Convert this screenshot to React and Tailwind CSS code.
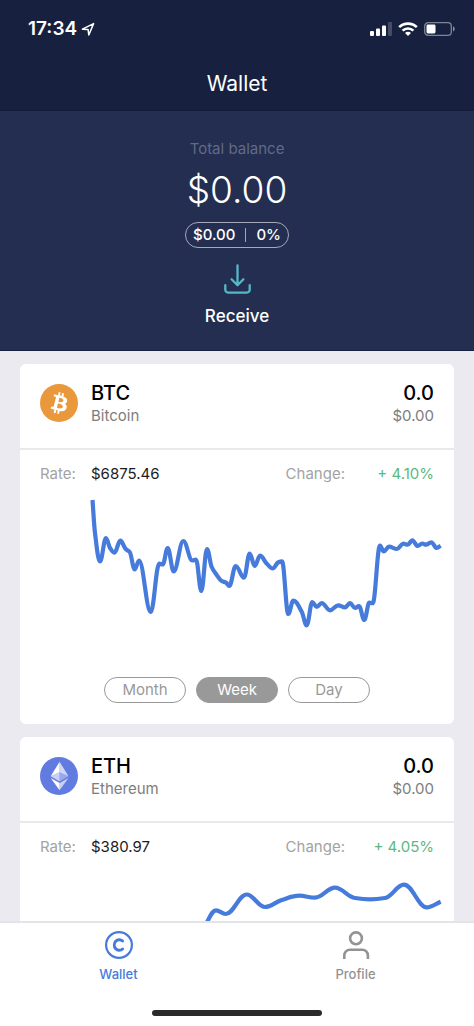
import React, { useState } from "react";

const btcPoints = [
  [0.5, 0], [3, 33], [8, 61.5], [14, 38], [18, 48], [22.5, 52.7], [28.3, 40.7], [33.7, 49],
  [37.7, 52], [42.7, 69.5], [47, 60.5], [58.7, 112], [67.3, 63.5], [70.7, 64.5], [75.7, 48],
  [81.7, 71.5], [91.3, 41], [100.3, 60.5], [104, 59.5], [109.3, 91], [115, 49], [119.7, 67],
  [123.7, 73.5], [129.7, 81], [134, 82.7], [137.3, 86], [143.7, 66], [152, 77.7], [157.7, 53.5],
  [162.7, 66], [168, 55.7], [174.7, 63.5], [180.7, 68.5], [186.3, 62.3], [190, 61.3],
  [196.3, 114], [201.3, 100.5], [209.7, 111.7], [214.7, 125.3], [220.3, 102], [224.7, 107],
  [229.7, 103], [238, 110.3], [246.3, 105.3], [253, 107.3], [258, 103], [263, 108], [267, 106],
  [272.3, 120], [277.3, 102.7], [280.7, 103.2], [288, 45.5], [291.7, 51.5], [297, 46.7],
  [305, 49], [311.3, 43.7], [315.7, 44.7], [320.3, 40.3], [325.7, 46], [330.3, 43.5],
  [334, 44.7], [339.3, 42.3], [344.7, 48], [348.7, 45.7],
];

const ethPoints = [
  [0, 96], [30, 78], [58, 104], [86, 88], [104, 78], [114.5, 50], [124, 37.3], [133.7, 41],
  [154.7, 21.5], [173, 34], [189.7, 27], [207.3, 22.7], [223, 24.7], [243, 14.7],
  [263, 25], [278, 26.3], [293, 25], [312, 11.7], [334.7, 34.3], [348.7, 28.7],
];

// Monotone cubic interpolation: peaks and valleys stay on the data points.
function smoothPath(p) {
  const n = p.length;
  const d = [];
  for (let i = 0; i < n - 1; i++) d.push((p[i + 1][1] - p[i][1]) / (p[i + 1][0] - p[i][0]));
  const m = p.map((_, i) => {
    if (i === 0) return d[0];
    if (i === n - 1) return d[n - 2];
    return d[i - 1] * d[i] <= 0 ? 0 : (2 * d[i - 1] * d[i]) / (d[i - 1] + d[i]);
  });
  let s = `M${p[0][0]} ${p[0][1]}`;
  for (let i = 0; i < n - 1; i++) {
    const h = (p[i + 1][0] - p[i][0]) * 0.38;
    s += `C${p[i][0] + h} ${p[i][1] + m[i] * h} ${p[i + 1][0] - h} ${p[i + 1][1] - m[i + 1] * h} ${p[i + 1][0]} ${p[i + 1][1]}`;
  }
  return s;
}

function BitcoinIcon() {
  return (
    <svg viewBox="0 0 32 32" className="size-[38px] shrink-0" aria-hidden="true">
      <circle cx="16" cy="16" r="16" fill="#e9983c" />
      <path
        transform="translate(1.3 1.2) scale(.93)"
        fill="#fff"
        fillRule="evenodd"
        d="M23.189 14.02c.314-2.096-1.283-3.223-3.465-3.975l.708-2.84-1.728-.43-.69 2.765c-.454-.114-.92-.22-1.385-.326l.695-2.783L15.596 6l-.708 2.839c-.376-.086-.746-.17-1.104-.26l.002-.009-2.384-.595-.46 1.846s1.283.294 1.256.312c.7.175.826.638.805 1.006l-.806 3.235c.048.012.11.03.18.057l-.183-.045-1.13 4.532c-.086.212-.303.531-.793.41.018.025-1.256-.313-1.256-.313l-.858 1.978 2.25.561c.418.105.828.215 1.231.318l-.715 2.872 1.727.43.708-2.84c.472.127.93.245 1.378.357l-.706 2.828 1.728.43.715-2.866c2.948.558 5.164.333 6.097-2.333.752-2.146-.037-3.385-1.588-4.192 1.13-.26 1.98-1.003 2.207-2.538zm-3.95 5.538c-.533 2.147-4.148.986-5.32.695l.95-3.805c1.172.293 4.929.872 4.37 3.11zm.535-5.569c-.487 1.953-3.495.96-4.47.717l.86-3.45c.975.243 4.118.696 3.61 2.733z"
      />
    </svg>
  );
}

function EthereumIcon() {
  return (
    <svg viewBox="0 0 32 32" className="size-[38px] shrink-0" aria-hidden="true">
      <circle cx="16" cy="16" r="16" fill="#627be0" />
      <g fill="#fff">
        <path fillOpacity=".7" d="M16.498 4v8.87l7.497 3.35z" />
        <path d="M16.498 4L9 16.22l7.498-3.35z" />
        <path fillOpacity=".65" d="M16.498 21.968v6.027L24 17.616z" />
        <path d="M16.498 27.995v-6.028L9 17.616z" />
        <path fillOpacity=".35" d="M16.498 20.573l7.497-4.353-7.497-3.348z" />
        <path fillOpacity=".65" d="M9 16.22l7.498 4.353v-7.701z" />
      </g>
    </svg>
  );
}

function CoinCard({ icon, symbol, name, rate, change, points, ranges = [] }) {
  const [range, setRange] = useState("Week");
  return (
    <article className="shrink-0 rounded-md bg-white">
      <header className="flex h-[86px] items-start gap-[13px] border-b-2 border-[#e9e9ec] px-5 pt-[17px]">
        <div className="pt-[3px]">{icon}</div>
        <div className="flex-1">
          <h2 className="text-xl leading-6 font-medium text-black">{symbol}</h2>
          <p className="text-[15px] leading-[22px] text-[#7d7d7d]">{name}</p>
        </div>
        <div className="text-right">
          <p className="text-xl leading-6 font-medium text-black">0.0</p>
          <p className="text-[15px] leading-[22px] text-[#7d7d7d]">$0.00</p>
        </div>
      </header>
      <dl className="flex px-5 pt-3 text-[15px] leading-6">
        <dt className="w-[51px] text-[#a3a3a3]">Rate:</dt>
        <dd className="flex-1 text-[#1c1c1c]">{rate}</dd>
        <dt className="text-[#a3a3a3]">Change:</dt>
        <dd className="w-[89px] text-right text-[#5cb881]">{change}</dd>
      </dl>
      <div className="pt-[14px] pr-[13px] pb-[47px] pl-[72px]">
        <svg viewBox="0 0 349 130" className="block w-full overflow-visible" role="img" aria-label={`${name} rate`}>
          <path d={smoothPath(points)} fill="none" stroke="#467bdb" strokeWidth="4.2" strokeLinejoin="round" />
        </svg>
      </div>
      {ranges.length > 0 && (
        <div className="flex justify-center gap-[10px] pb-[21px]">
          {ranges.map((r) => (
            <button
              key={r}
              type="button"
              aria-pressed={range === r}
              onClick={() => setRange(r)}
              className={
                "h-[26px] w-[82px] rounded-full border text-[15px] leading-6 " +
                (range === r ? "border-[#999] bg-[#999] text-white" : "border-[#999] bg-white text-[#999]")
              }
            >
              {r}
            </button>
          ))}
        </div>
      )}
    </article>
  );
}

export default function App() {
  return (
    <div className="flex h-dvh flex-col bg-[#ebeaf1] font-['Inter','Liberation_Sans',sans-serif]">
      <header className="shrink-0 border-b border-[#131c38] bg-[#17213f] text-white">
        <div className="flex h-[58px] items-center justify-between pr-[18px] pl-7">
          <div className="flex items-center gap-1">
            <span className="text-[19px] leading-6 font-semibold">17:34</span>
            <svg viewBox="0 0 14 14" className="size-[14px]" aria-hidden="true">
              <path d="M12.6 1.6L1.4 7.2l5.7.4.7 5.4z" fill="none" stroke="#fff" strokeWidth="1.5" strokeLinejoin="round" />
            </svg>
          </div>
          <div className="flex items-center gap-[6px]">
            <svg viewBox="0 0 22 14" className="h-[14px] w-[22px]" fill="#fff" aria-hidden="true">
              <rect x="0" y="9" width="4" height="5" rx="1" />
              <rect x="6" y="6.5" width="4" height="7.5" rx="1" />
              <rect x="12" y="3.5" width="4" height="10.5" rx="1" />
              <rect x="18" y="0" width="4" height="14" rx="1" fillOpacity=".2" />
            </svg>
            <svg viewBox="0 0 20 14" className="h-[14px] w-5" aria-hidden="true">
              <g fill="none" stroke="#fff" strokeWidth="2.6">
                <path d="M1.2 5.2a12.5 12.5 0 0 1 17.6 0" />
                <path d="M4.6 8.7a7.6 7.6 0 0 1 10.8 0" />
              </g>
              <path fill="#fff" d="M10 14l-3-3.1a4.2 4.2 0 0 1 6 0z" />
            </svg>
            <svg viewBox="0 0 32 14" className="h-[14px] w-8" aria-hidden="true">
              <rect x=".7" y=".7" width="26.6" height="12.6" rx="3.4" fill="none" stroke="#fff" strokeOpacity=".45" strokeWidth="1.3" />
              <rect x="2.5" y="2.5" width="9" height="9" rx="1.4" fill="#fff" />
              <path d="M29 4.6v4.8c1-.3 1.7-1.2 1.7-2.4s-.7-2.1-1.7-2.4z" fill="#fff" fillOpacity=".5" />
            </svg>
          </div>
        </div>
        <h1 className="py-[14px] text-center text-[21px] leading-6">Wallet</h1>
      </header>

      <section className="flex shrink-0 flex-col items-center border-b border-[#17213f] bg-[#232e51] pt-7 pb-5 text-white">
        <p className="text-[15px] leading-5 text-[#626a86]">Total balance</p>
        <p className="pt-2 text-[37px] leading-[46px] font-light">$0.00</p>
        <p className="mt-[9px] flex h-[26px] items-center gap-[10px] rounded-full border border-[#a5a9ba] px-[7px] text-[15px] font-medium">
          <span>$0.00</span>
          <span className="h-[14px] w-px bg-[#a5a9ba]" />
          <span>0%</span>
        </p>
        <button type="button" className="mt-4 flex flex-col items-center gap-2">
          <svg viewBox="0 0 27 30" className="h-[30px] w-[27px]" fill="none" stroke="#55b8c9" strokeWidth="2.3" strokeLinecap="round" strokeLinejoin="round" aria-hidden="true">
            <path d="M13.500 1.400v19.400M7.600 15.300l5.900 5.900 5.900-5.900" />
            <path d="M1.300 21.200v4.600a2.800 2.800 0 0 0 2.800 2.800h18.800a2.800 2.800 0 0 0 2.800-2.800v-4.600" />
          </svg>
          <span className="text-[17px] leading-7 font-medium">Receive</span>
        </button>
      </section>

      <main className="flex min-h-0 flex-1 flex-col gap-[13px] overflow-y-auto px-5 py-[13px] [scrollbar-width:none]">
        <CoinCard
          icon={<BitcoinIcon />}
          symbol="BTC"
          name="Bitcoin"
          rate="$6875.46"
          change="+ 4.10%"
          points={btcPoints}
          ranges={["Month", "Week", "Day"]}
        />
        <CoinCard icon={<EthereumIcon />} symbol="ETH" name="Ethereum" rate="$380.97" change="+ 4.05%" points={ethPoints} />
      </main>

      <footer className="shrink-0 border-t-2 border-[#e4e4e6] bg-white">
        <nav className="grid grid-cols-2 text-[13px] leading-4 font-medium">
          <a href="#wallet" aria-current="page" className="flex flex-col items-center gap-[7px] pt-2 text-[#467bdb]">
            <svg viewBox="0 0 28 28" className="size-7" fill="none" stroke="currentColor" aria-hidden="true">
              <circle cx="14" cy="14" r="12.9" strokeWidth="2.2" />
              <path d="M17.600 10a5 5.300 0 1 0 0 8" strokeWidth="3" strokeLinecap="round" />
            </svg>
            Wallet
          </a>
          <a href="#profile" className="flex flex-col items-center gap-[7px] pt-2 text-[#939393]">
            <svg viewBox="0 0 28 28" className="size-7" fill="none" stroke="currentColor" strokeWidth="2.6" aria-hidden="true">
              <circle cx="14" cy="7.300" r="5.900" />
              <path d="M2.300 28v-3.600a5.600 5.600 0 0 1 5.600-5.600h12.400a5.600 5.600 0 0 1 5.600 5.600v3.600" />
            </svg>
            Profile
          </a>
        </nav>
        <div className="flex justify-center pt-7 pb-[10px]">
          <div className="h-[6px] w-[170px] rounded-full bg-[#2b2b2b]" />
        </div>
      </footer>
    </div>
  );
}
